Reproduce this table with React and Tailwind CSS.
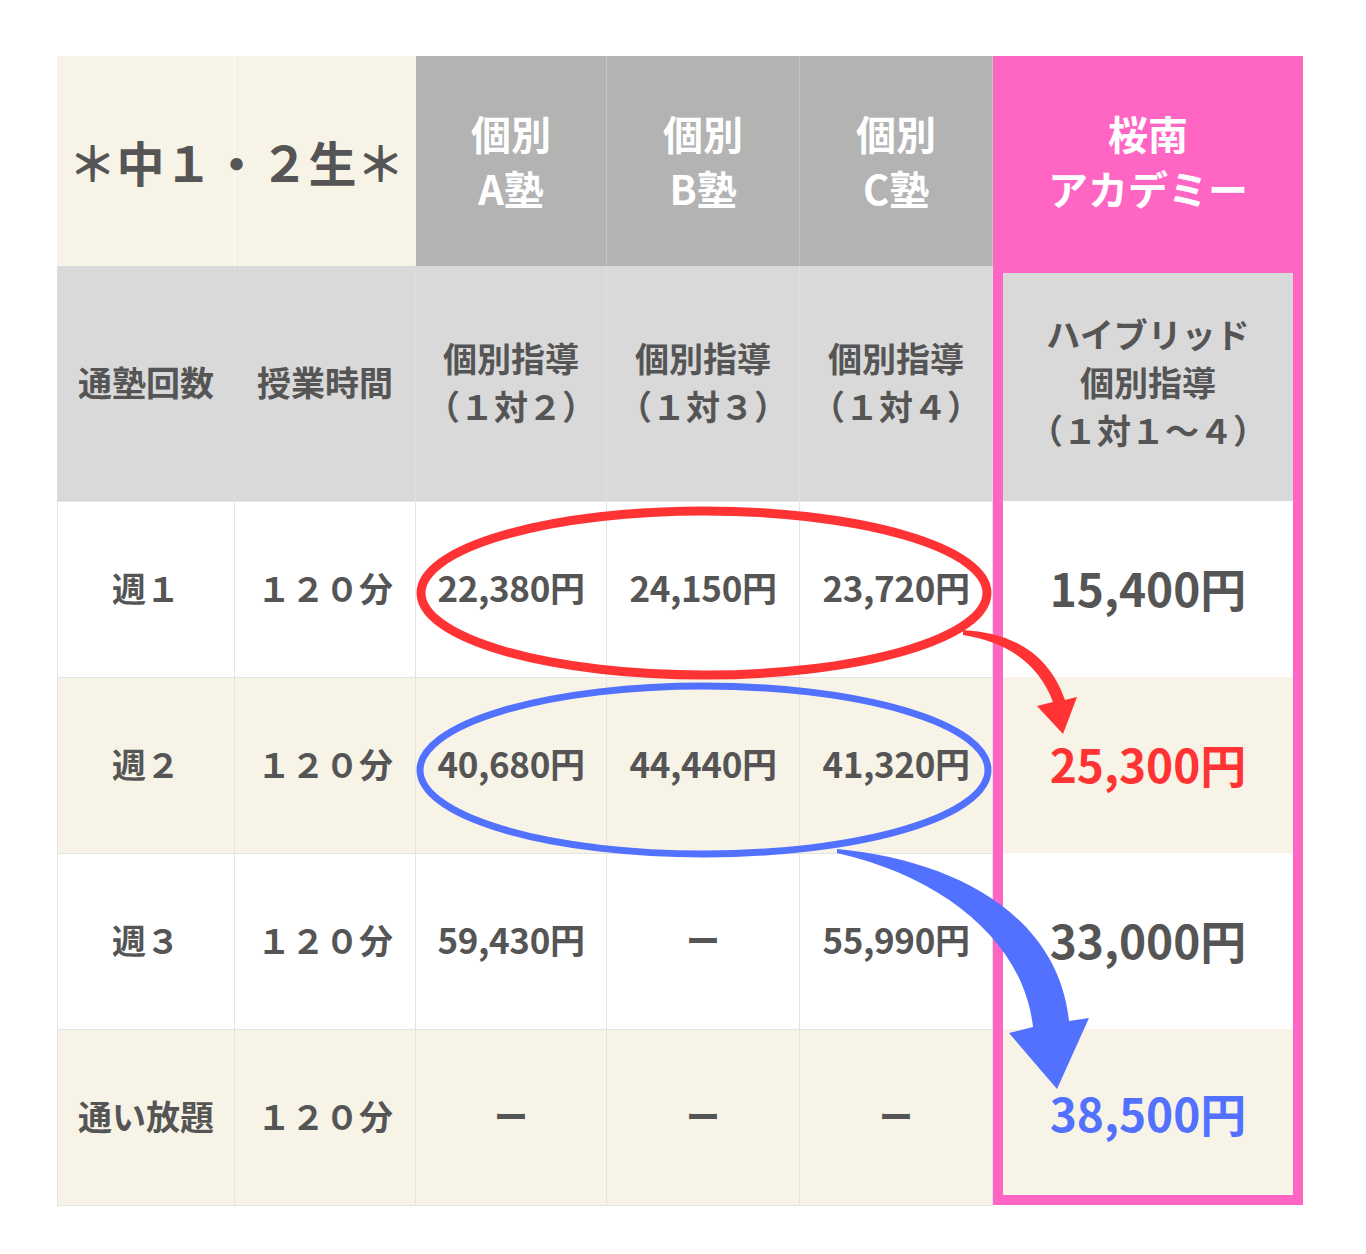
import React from 'react';

// 料金比較表（中1・2生）
const rows = [
  { label: '週１', a: '22,380円', b: '24,150円', c: '23,720円', ours: '15,400円', oursText: 'text-[#555555]', bg: 'bg-white' },
  { label: '週２', a: '40,680円', b: '44,440円', c: '41,320円', ours: '25,300円', oursText: 'text-[#ff3333]', bg: 'bg-[#f7f4e7]' },
  { label: '週３', a: '59,430円', b: 'ー', c: '55,990円', ours: '33,000円', oursText: 'text-[#555555]', bg: 'bg-white' },
  { label: '通い放題', a: 'ー', b: 'ー', c: 'ー', ours: '38,500円', oursText: 'text-[#5271ff]', bg: 'bg-[#f7f4e7]' },
];

const PriceText = ({ value }) =>
  value === 'ー' ? (
    <span className="text-[34px]">ー</span>
  ) : (
    <span className="text-[35px] tracking-[-0.01em]">{value}</span>
  );

const Overlay = () => (
  <svg
    className="absolute top-0 left-0 pointer-events-none"
    width="1366"
    height="1254"
    viewBox="0 0 1366 1254"
  >
    {/* 赤い楕円 + 矢印 */}
    <ellipse cx="704" cy="593" rx="283" ry="82" fill="none" stroke="#ff3333" strokeWidth="9" />
    <path
      d="M963 630 Q1042 634 1065 700 L1077 697 L1063 734 L1037 706 L1053 702 Q1032 646 963 635 Z"
      fill="#ff3333"
    />
    {/* 青い楕円 + 矢印 */}
    <ellipse cx="704" cy="770" rx="284" ry="84" fill="none" stroke="#5271ff" strokeWidth="7" />
    <path
      d="M837 849 C955 860 1058 915 1069 1021 L1089 1018 L1057 1089 L1009 1033 L1033 1027 C1024 945 948 878 837 853 Z"
      fill="#5271ff"
    />
  </svg>
);

const App = () => {
  return (
    <div className="relative min-h-[1254px] bg-white pt-[56px] pl-[57px] font-['Noto_Sans_CJK_JP','Noto_Sans',sans-serif] text-[#555555]">
      <div className="grid w-[1246px] grid-cols-[178px_181px_191px_193px_193px_310px] grid-rows-[210px_235px_176px_176px_176px_176px] font-bold">
        {/* header row 1 */}
        <div className="col-span-2 flex items-center justify-center bg-[linear-gradient(to_right,#f7f4e7_177px,#fcfbf5_177px,#fcfbf5_178px,#f7f4e7_178px)] text-[48px] leading-none">
          ＊中１・２生＊
        </div>
        {['A', 'B', 'C'].map((k) => (
          <div
            key={k}
            className="flex flex-col items-center justify-center border-r border-[#c4c4c4] bg-[#b3b3b3] text-[40px] leading-[55px] text-white"
          >
            <span>個別</span>
            <span>{k}塾</span>
          </div>
        ))}
        <div className="flex flex-col items-center justify-center bg-[#ff66c4] text-[40px] leading-[55px] text-white">
          <span>桜南</span>
          <span>アカデミー</span>
        </div>

        {/* header row 2 */}
        <div className="flex items-center justify-center border-l border-r border-[#dedede] bg-[#d9d9d9] pb-1 text-[34px]">通塾回数</div>
        <div className="flex items-center justify-center border-r border-[#dedede] bg-[#d9d9d9] pb-1 text-[34px]">授業時間</div>
        {['２', '３', '４'].map((n) => (
          <div
            key={n}
            className="flex flex-col items-center justify-center border-r border-[#dedede] bg-[#d9d9d9] pb-1 text-[34px] leading-[48px]"
          >
            <span>個別指導</span>
            <span>（１対{n}）</span>
          </div>
        ))}
        <div className="flex flex-col items-center justify-center border-x-[10px] border-t-[7px] border-[#ff66c4] bg-[#d9d9d9] pb-[11px] text-[34px] leading-[48px]">
          <span>ハイブリッド</span>
          <span>個別指導</span>
          <span>（１対１～４）</span>
        </div>

        {/* data rows */}
        {rows.map((r, i) => (
          <React.Fragment key={r.label}>
            <div className={`flex items-center justify-center border-l border-r border-t border-[#e4e4e4] pb-1 text-[34px] ${r.bg}`}>
              {r.label}
            </div>
            <div className={`flex items-center justify-center border-r border-t border-[#e4e4e4] pb-1 text-[34px] ${r.bg}`}>
              １２０分
            </div>
            {[r.a, r.b, r.c].map((v, j) => (
              <div
                key={j}
                className={`flex items-center justify-center border-r border-t border-[#e4e4e4] pb-1 ${r.bg}`}
              >
                <PriceText value={v} />
              </div>
            ))}
            <div
              className={
                i === rows.length - 1
                  ? `flex items-center justify-center border-x-[10px] border-b-[10px] border-[#ff66c4] text-[46px] ${r.oursText} ${r.bg}`
                  : `flex items-center justify-center border-x-[10px] border-[#ff66c4] pb-1 text-[46px] ${r.oursText} ${r.bg}`
              }
            >
              {r.ours}
            </div>
          </React.Fragment>
        ))}
      </div>
      <div className="w-[936px] border-t border-[#e4e4e4]" />
      <Overlay />
    </div>
  );
};

export default App;
